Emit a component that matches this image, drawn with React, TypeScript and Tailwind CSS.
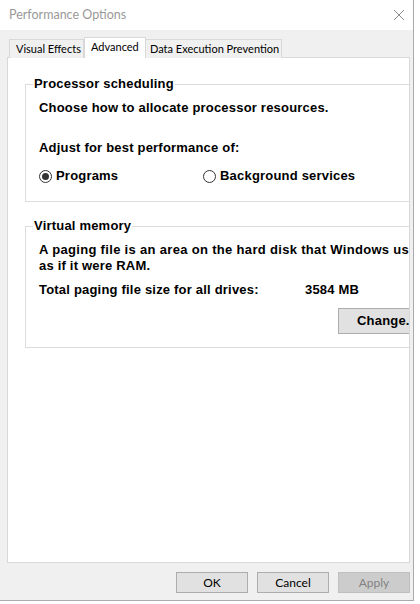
import React from 'react'

const UI = { fontFamily: 'Lato, "Noto Sans", Arial, sans-serif' }
const CLASSIC = { fontFamily: '"Liberation Sans", Arial, sans-serif' }

function Radio({ checked, label }: { checked?: boolean; label: string }) {
  return (
    <div className="flex items-center h-[16px]">
      <span className="flex items-center justify-center w-[13px] h-[13px] rounded-full border border-[#333333] bg-white">
        {checked && <span className="block w-[7px] h-[7px] rounded-full bg-[#333333]" />}
      </span>
      <span className="ml-[4px]">{label}</span>
    </div>
  )
}

function GroupBox({ title, height, children }: { title: string; height: string; children: React.ReactNode }) {
  return (
    <div className={`w-[400px] border border-[#dcdcdc] ${height}`}>
      <span className="block w-fit -mt-[9px] ml-[7px] px-[1px] bg-white leading-[16px]">{title}</span>
      <div className="pl-[13px]">{children}</div>
    </div>
  )
}

export default function App() {
  return (
    <div className="w-[420px] h-[604px] bg-white overflow-hidden">
      <div className="w-[414px] h-[601px] flex flex-col bg-[#f0f0f0] border-r border-b border-[#aaaaaa]">
        {/* title bar */}
        <div className="h-[30px] bg-white flex items-center justify-between pl-[9px] pr-[4px] shrink-0">
          <span className="text-[12.5px] text-[#999999]" style={UI}>Performance Options</span>
          <svg width="12" height="12" viewBox="0 0 12 12" className="mr-[4px]">
            <path d="M1 1 L11 11 M11 1 L1 11" stroke="#8a8a8a" strokeWidth="1" fill="none" />
          </svg>
        </div>

        {/* tabs */}
        <div className="flex items-end pl-[9px] mt-[7px] h-[21px] text-[11px] text-black whitespace-nowrap relative z-10 -mb-px" style={UI}>
          <div className="h-[19px] w-[75px] border border-b-0 border-[#d9d9d9] bg-[#f0f0f0] pl-[6px] leading-[18px]">Visual Effects</div>
          <div className="h-[21px] w-[62px] border border-b-0 border-[#d9d9d9] bg-white pl-[6px] leading-[18px]">Advanced</div>
          <div className="h-[19px] w-[136px] border border-b-0 border-l-0 border-[#d9d9d9] bg-[#f0f0f0] pl-[4px] leading-[18px]">Data Execution Prevention</div>
        </div>

        {/* panel */}
        <div className="ml-[7px] w-[403px] h-[506px] bg-white border border-[#d9d9d9] overflow-hidden shrink-0">
          <div className="ml-[17px] mt-[26px] text-[13px] font-bold text-black tracking-[0.2px] whitespace-nowrap" style={CLASSIC}>
            <GroupBox title="Processor scheduling" height="h-[118px]">
              <p className="mt-[8px] leading-[16px]">Choose how to allocate processor resources.</p>
              <p className="mt-[24px] leading-[16px]">Adjust for best performance of:</p>
              <div className="mt-[12px] flex">
                <div className="w-[164px]"><Radio checked label="Programs" /></div>
                <Radio label="Background services" />
              </div>
            </GroupBox>

            <div className="mt-[24px]">
              <GroupBox title="Virtual memory" height="h-[122px]">
                <p className="mt-[8px] leading-[16px] tracking-[0.32px]">A paging file is an area on the hard disk that Windows uses</p>
                <p className="leading-[16px]">as if it were RAM.</p>
                <div className="mt-[8px] flex leading-[16px]">
                  <span className="w-[266px]">Total paging file size for all drives:</span>
                  <span>3584 MB</span>
                </div>
                <button className="mt-[10px] ml-[299px] h-[26px] w-[80px] bg-[#e1e1e1] border border-[#adadad] text-left pl-[18px] font-bold">
                  Change...
                </button>
              </GroupBox>
            </div>
          </div>
        </div>

        {/* buttons */}
        <div className="flex justify-end gap-[9px] pr-[3px] mt-[9px] text-[12px]" style={UI}>
          <button className="w-[72px] h-[21px] bg-[#e1e1e1] border border-[#adadad] text-black">OK</button>
          <button className="w-[72px] h-[21px] bg-[#e1e1e1] border border-[#adadad] text-black">Cancel</button>
          <button className="w-[72px] h-[21px] bg-[#cccccc] border border-[#bfbfbf] text-[#838383]">Apply</button>
        </div>
      </div>
    </div>
  )
}
